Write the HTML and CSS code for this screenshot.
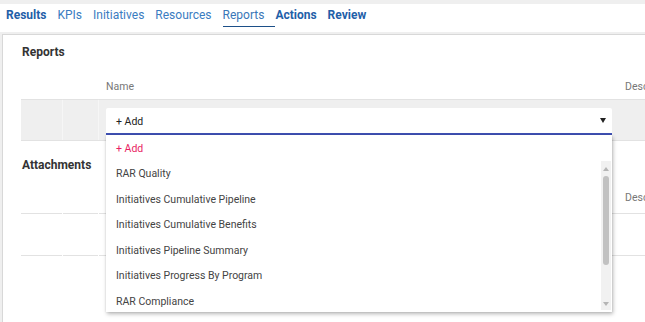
FILE: index.html
```html
<!DOCTYPE html>
<html>
<head>
<meta charset="utf-8">
<link rel="stylesheet" href="styles.css">
</head>
<body>
<nav class="tabs">
  <a class="tab strong">Results</a>
  <a class="tab">KPIs</a>
  <a class="tab">Initiatives</a>
  <a class="tab">Resources</a>
  <a class="tab active">Reports</a>
  <a class="tab strong">Actions</a>
  <a class="tab strong">Review</a>
</nav>
<main class="card">
  <section class="section">
    <h2 class="title">Reports</h2>
    <div class="grid">
      <div class="row head">
        <div class="c1"></div><div class="c2"></div>
        <div class="c3">Name</div>
        <div class="c4">Desc</div>
      </div>
      <div class="row edit">
        <div class="c1"></div><div class="c2"></div>
        <div class="c3">
          <div class="select">
            <span class="val">+ Add</span>
            <span class="caret"></span>
            <div class="menu">
              <div class="opt add">+ Add</div>
              <div class="listwrap">
                <div class="list">
                  <div class="opt">RAR Quality</div>
                  <div class="opt">Initiatives Cumulative Pipeline</div>
                  <div class="opt">Initiatives Cumulative Benefits</div>
                  <div class="opt">Initiatives Pipeline Summary</div>
                  <div class="opt">Initiatives Progress By Program</div>
                  <div class="opt">RAR Compliance</div>
                </div>
                <div class="sbar">
                  <span class="arr up"></span>
                  <span class="thumb"></span>
                  <span class="arr down"></span>
                </div>
              </div>
            </div>
          </div>
        </div>
        <div class="c4"></div>
      </div>
    </div>
  </section>
  <section class="section att">
    <h2 class="title">Attachments</h2>
    <div class="grid">
      <div class="row head">
        <div class="c1"></div><div class="c2"></div>
        <div class="c3"></div>
        <div class="c4">Desc</div>
      </div>
      <div class="row empty">
        <div class="c1"></div><div class="c2"></div>
        <div class="c3"></div>
        <div class="c4"></div>
      </div>
    </div>
  </section>
</main>
</body>
</html>
```
FILE: styles.css
```css
* { box-sizing: border-box; }
html, body { margin: 0; padding: 0; }
body {
  background: #efefef;
  font-family: Roboto, "Liberation Sans", Arial, sans-serif;
  width: 645px;
  height: 322px;
  overflow: hidden;
}
.tabs {
  margin-top: 4px;
  height: 28px;
  background: #fff;
  display: flex;
  align-items: flex-start;
  padding: 4px 0 0 6px;
  font-size: 12px;
}
.tab {
  color: #3a7cc1;
  line-height: 15px;
  padding: 0 11px 3px 0;
}
.tab.strong { font-weight: 700; color: #1f60a8; }
.tab.active { color: #3a77b8; border-bottom: 1px solid #1c4f88; }
.card {
  margin: 2px 0 0 2px;
  background: #fff;
  border: 1px solid #d8d8d8;
  border-right: none;
  height: 400px;
  padding-top: 9px;
}
.section { padding-left: 18px; }
.title {
  margin: 0 0 0 1px;
  font-size: 12px;
  font-weight: 700;
  color: #333;
  height: 16px;
  line-height: 16px;
}
.grid { width: 700px; }
.row { display: flex; }
.c1 { width: 41px; margin-right: 1px; }
.c2 { width: 35px; margin-right: 1px; }
.c3 { width: 519px; padding-left: 7px; }
.c4 { flex: 1; padding-left: 7px; }
.row.head { height: 40px; font-size: 10.5px; color: #777; }
.row.head > div, .row.empty > div {
  border-bottom: 1px solid #e2e2e2;
  display: flex;
  align-items: flex-end;
  padding-bottom: 6px;
}
.row.head .c1, .row.head .c2 { padding: 0; }
.row.edit { background: #efefef; height: 42px; border-top: 1px solid #e4e4e4; border-bottom: 1px solid #e2e2e2; margin-top: -1px; padding-top: 8px; }
.row.edit .c1, .row.edit .c2 { margin-right: 0; border-right: 1px solid #f6f6f6; margin-top: -8px; height: 40px; }
.row.edit .c1 { width: 42px; }
.row.edit .c2 { width: 36px; }
.row.edit .c3 { padding-right: 6px; }
.select {
  position: relative;
  height: 27px;
  background: #fff;
  border-bottom: 2px solid #3f51b5;
  border-radius: 2px 2px 0 0;
  display: flex;
  align-items: center;
  justify-content: space-between;
  padding: 0 5px 0 10px;
  font-size: 10.5px;
  color: #222;
}
.val { padding-top: 2px; }
.caret {
  width: 0; height: 0;
  border-left: 3.5px solid transparent;
  border-right: 3.5px solid transparent;
  border-top: 5px solid #222;
  margin-right: 1px;
}
.menu {
  position: absolute;
  left: 0; right: 0;
  top: 27px;
  background: #fff;
  box-shadow: 1px 2px 4px rgba(0,0,0,0.28), 0 0 2px rgba(0,0,0,0.1);
  font-size: 10.5px;
  color: #444;
  z-index: 5;
}
.opt { height: 25.5px; line-height: 25.5px; padding-left: 10px; white-space: nowrap; }
.opt.add { color: #e91e63; height: 26px; line-height: 28px; overflow: hidden; }
.listwrap { display: flex; height: 151px; }
.list { flex: 1; overflow: hidden; }
.sbar {
  width: 10px;
  margin: 0 1px 2px 0;
  background: #f1f1f1;
  display: flex;
  flex-direction: column;
  align-items: center;
  padding: 6px 0 4px;
}
.arr { width: 0; height: 0; border-left: 3.5px solid transparent; border-right: 3.5px solid transparent; }
.arr.up { border-bottom: 4px solid #b5b5b5; }
.arr.down { border-top: 4px solid #b5b5b5; margin-top: auto; }
.thumb { width: 6px; height: 89px; background: #c1c1c1; border-radius: 3px; margin-top: 5px; }
.att { margin-top: 16px; }
.att .row.head { height: 41px; }
.att .row.head > div { padding-bottom: 9px; }
.row.empty { height: 42px; }
```
